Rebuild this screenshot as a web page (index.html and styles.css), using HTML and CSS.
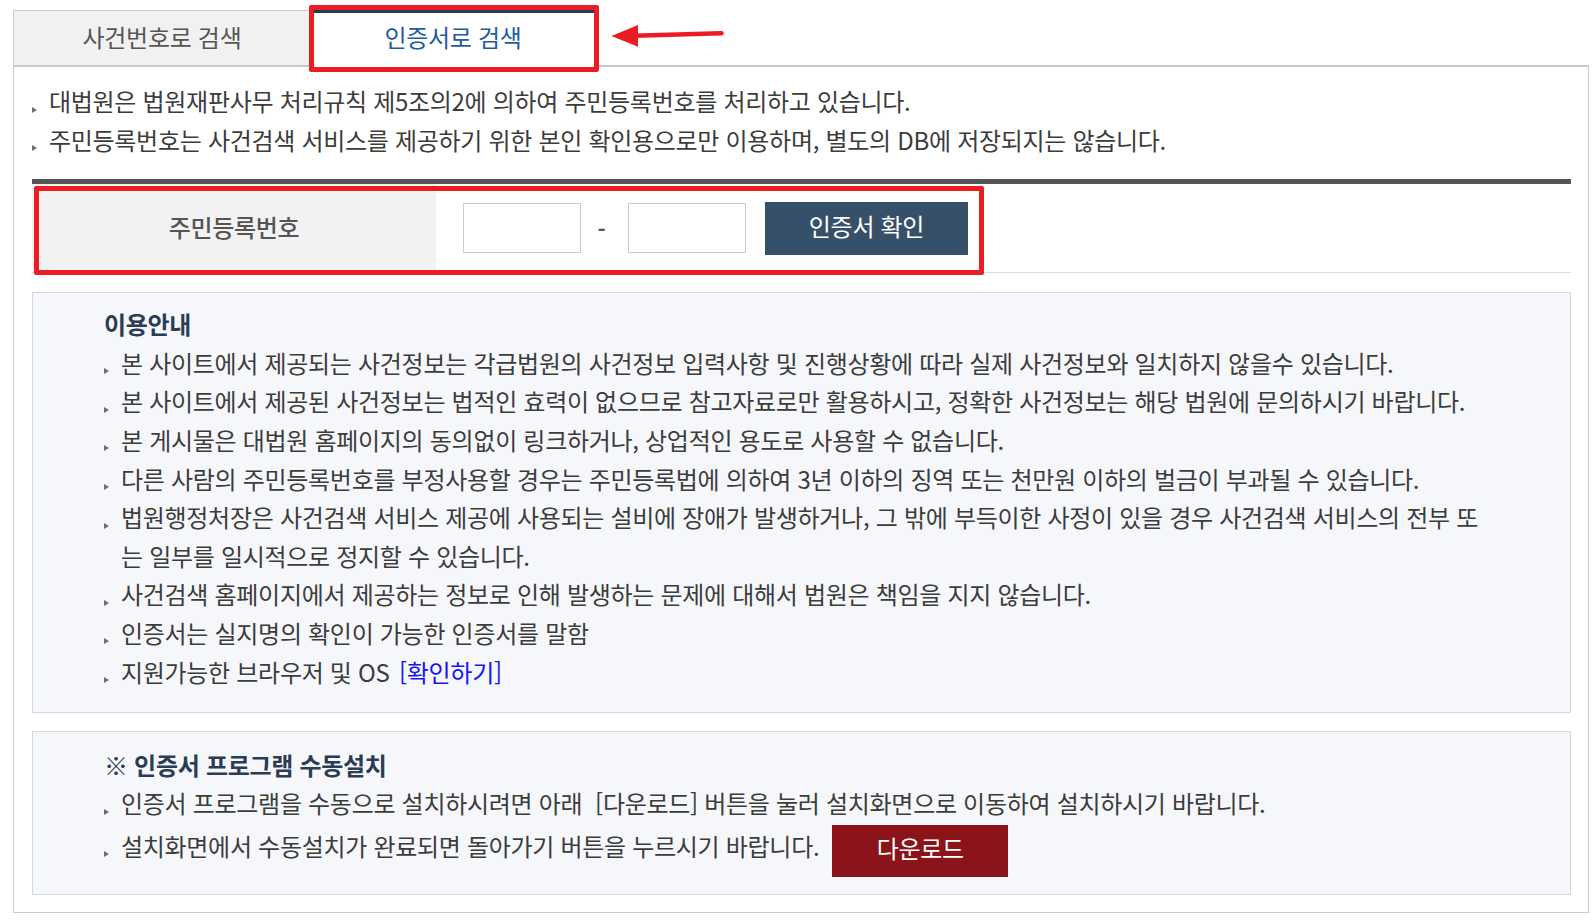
FILE: index.html
```html
<!DOCTYPE html>
<html lang="ko">
<head>
<meta charset="utf-8">
<title>인증서로 검색</title>
<link rel="stylesheet" href="styles.css">
</head>
<body>
<div class="page">
  <div class="tabs">
    <div class="tab">사건번호로 검색</div>
    <div class="tab tab-active">인증서로 검색</div>
    <div class="tab-fill"></div>
    <span class="mark mark-tab"></span>
    <svg class="arrow" viewBox="0 0 116 32" width="116" height="32" aria-hidden="true">
      <line x1="24" y1="15.8" x2="111.5" y2="13.3" stroke="#ec1c24" stroke-width="4.5" stroke-linecap="round"/>
      <polygon points="1.5,16 28,5 28,26.8" fill="#ec1c24"/>
    </svg>
  </div>

  <div class="panel">
    <ul class="notes">
      <li>대법원은 법원재판사무 처리규칙 제5조의2에 의하여 주민등록번호를 처리하고 있습니다.</li>
      <li>주민등록번호는 사건검색 서비스를 제공하기 위한 본인 확인용으로만 이용하며, 별도의 DB에 저장되지는 않습니다.</li>
    </ul>

    <div class="form-row">
      <div class="form-label">주민등록번호</div>
      <div class="form-field">
        <input class="rrn" type="text" aria-label="주민등록번호 앞자리">
        <span class="dash">-</span>
        <input class="rrn" type="password" aria-label="주민등록번호 뒷자리">
        <button class="btn-cert" type="button">인증서 확인</button>
      </div>
      <span class="mark mark-form"></span>
    </div>

    <div class="info-box">
      <h3 class="info-title">이용안내</h3>
      <ul class="notes">
        <li>본 사이트에서 제공되는 사건정보는 각급법원의 사건정보 입력사항 및 진행상황에 따라 실제 사건정보와 일치하지 않을수 있습니다.</li>
        <li>본 사이트에서 제공된 사건정보는 법적인 효력이 없으므로 참고자료로만 활용하시고, 정확한 사건정보는 해당 법원에 문의하시기 바랍니다.</li>
        <li>본 게시물은 대법원 홈페이지의 동의없이 링크하거나, 상업적인 용도로 사용할 수 없습니다.</li>
        <li>다른 사람의 주민등록번호를 부정사용할 경우는 주민등록법에 의하여 3년 이하의 징역 또는 천만원 이하의 벌금이 부과될 수 있습니다.</li>
        <li>법원행정처장은 사건검색 서비스 제공에 사용되는 설비에 장애가 발생하거나, 그 밖에 부득이한 사정이 있을 경우 사건검색 서비스의 전부 또<br>는 일부를 일시적으로 정지할 수 있습니다.</li>
        <li>사건검색 홈페이지에서 제공하는 정보로 인해 발생하는 문제에 대해서 법원은 책임을 지지 않습니다.</li>
        <li>인증서는 실지명의 확인이 가능한 인증서를 말함</li>
        <li>지원가능한 브라우저 및 OS <a class="link" href="#">[확인하기]</a></li>
      </ul>
    </div>

    <div class="info-box info-box-2">
      <h3 class="info-title">※ 인증서 프로그램 수동설치</h3>
      <ul class="notes">
        <li>인증서 프로그램을 수동으로 설치하시려면 아래 &nbsp;[다운로드] 버튼을 눌러 설치화면으로 이동하여 설치하시기 바랍니다.</li>
        <li class="with-btn"><span class="btn-text">설치화면에서 수동설치가 완료되면 돌아가기 버튼을 누르시기 바랍니다.</span><button class="btn-down" type="button">다운로드</button></li>
      </ul>
    </div>
  </div>
</div>
</body>
</html>
```

FILE: styles.css
```css
* {
  box-sizing: border-box;
}

html, body {
  margin: 0;
  padding: 0;
  background: #ffffff;
}

body {
  font-family: "Noto Sans CJK KR", "Noto Sans", sans-serif;
  font-size: 24px;
  letter-spacing: -0.3px;
  color: #3c3c3c;
}

.page {
  width: 1576px;
  margin: 10px 0 0 13px;
}

/* Tabs */
.tabs {
  position: relative;
  display: flex;
  height: 57px;
}

.tab {
  width: 297px;
  height: 57px;
  display: flex;
  align-items: center;
  justify-content: center;
  background: #f1f1f1;
  border-top: 1px solid #cccccc;
  border-left: 1px solid #cccccc;
  border-bottom: 2px solid #c8c8c8;
  color: #555555;
  padding-bottom: 4px;
}

.tab-active {
  width: 286px;
  background: #ffffff;
  border-left: none;
  border-top: 3px solid #223a5e;
  border-bottom: none;
  color: #1d5ba3;
  padding-bottom: 8px;
}

.tab-fill {
  flex: 1;
  border-bottom: 2px solid #c8c8c8;
}

/* annotation overlays */
.mark {
  position: absolute;
  border: 5px solid #ec1c24;
  border-radius: 2px;
  pointer-events: none;
}

.mark-tab {
  left: 296px;
  top: -5px;
  width: 290px;
  height: 67px;
}

.arrow {
  position: absolute;
  left: 597px;
  top: 10px;
}

/* Panel */
.panel {
  border: 1px solid #cccccc;
  border-top: none;
  padding: 15px 17px 17px 18px;
}

.notes {
  list-style: none;
  margin: 0;
  padding: 0;
}

.notes li {
  position: relative;
  padding-left: 17px;
  line-height: 38.6px;
  white-space: nowrap;
}

.notes li::before {
  content: "";
  position: absolute;
  left: 0;
  top: 24.5px;
  width: 0;
  height: 0;
  border-top: 3px solid transparent;
  border-bottom: 3px solid transparent;
  border-left: 5px solid #6e6e6e;
}

.panel > .notes {
  margin-bottom: 20px;
}

/* Form row */
.form-row {
  position: relative;
  display: flex;
  height: 94px;
  border-top: 5px solid #555555;
  border-bottom: 1px solid #dcdcdc;
}

.form-label {
  width: 404px;
  background: #f2f2f2;
  display: flex;
  align-items: center;
  justify-content: center;
  font-weight: 500;
  color: #555555;
  padding-bottom: 4px;
}

.form-field {
  display: flex;
  align-items: center;
  padding-left: 27px;
}

.rrn {
  width: 118px;
  height: 50px;
  border: 1px solid #cccccc;
  background: #ffffff;
  margin: 0;
  padding: 0 8px;
  font: inherit;
}

.dash {
  width: 47px;
  text-align: center;
  padding-right: 6px;
  color: #555555;
  font-size: 22px;
  font-weight: 700;
}

.btn-cert {
  margin-left: 19px;
  width: 203px;
  height: 53px;
  border: none;
  background: #37506a;
  color: #ffffff;
  font: inherit;
  letter-spacing: -0.3px;
  padding: 0 0 5px;
}

.mark-form {
  left: 2px;
  top: 2px;
  width: 950px;
  height: 89px;
}

/* Info boxes */
.info-box {
  margin-top: 19px;
  background: #f6f7fb;
  border: 1px solid #d5d8de;
  padding: 12px 40px 21px 71px;
}

.info-title {
  margin: 0;
  font-size: 24px;
  font-weight: 700;
  line-height: 38.6px;
  color: #2b3d56;
}

.link {
  color: #1515f5;
  text-decoration: none;
  margin-left: 3px;
}

.info-box-2 {
  margin-top: 18px;
  padding-top: 13.5px;
  padding-bottom: 17px;
}

.notes li.with-btn {
  display: flex;
  align-items: flex-start;
}

.notes li.with-btn::before {
  top: 28.5px;
}

.btn-text {
  margin-top: 3.8px;
}

.btn-down {
  margin-left: 13px;
  margin-top: 2.3px;
  width: 176px;
  height: 52px;
  border: none;
  background: #8a1419;
  color: #ffffff;
  font: inherit;
  letter-spacing: -0.3px;
  padding: 0 0 5px;
}
```
